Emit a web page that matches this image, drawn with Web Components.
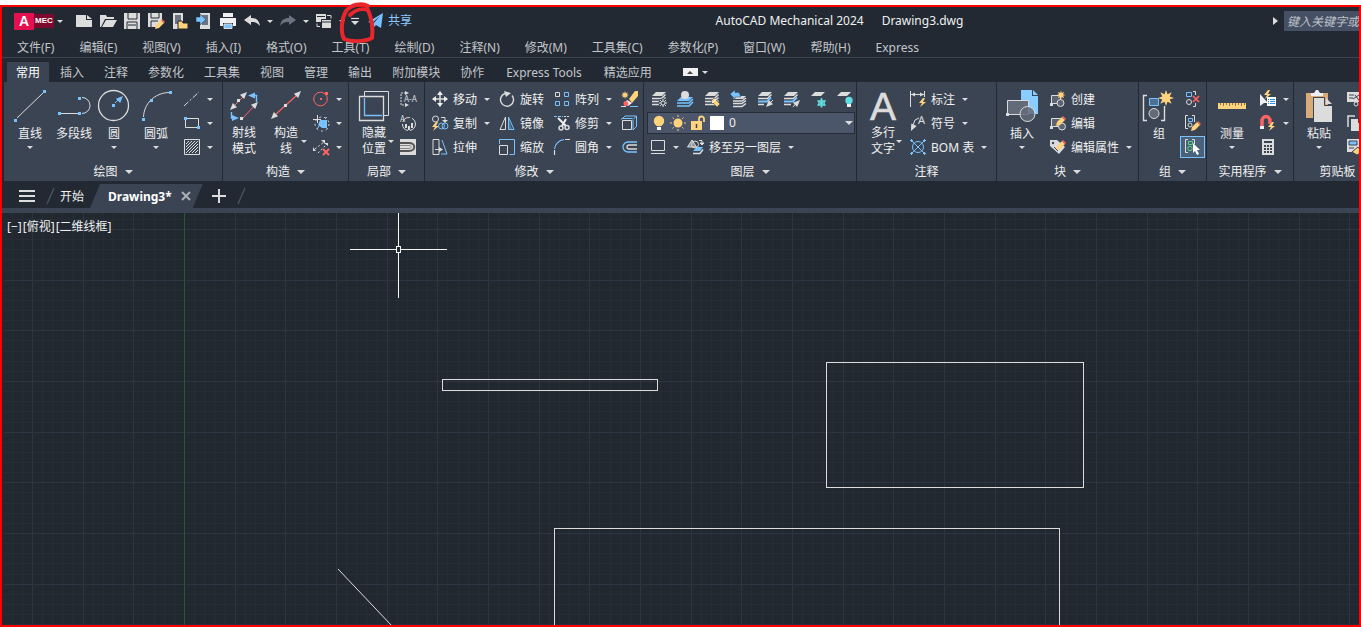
<!DOCTYPE html>
<html lang="zh-CN">
<head>
<meta charset="utf-8">
<title>AutoCAD Mechanical 2024 - Drawing3.dwg</title>
<style>
  html, body { margin: 0; height: 100%; }
  body {
    display: flex; flex-direction: column; box-sizing: border-box; padding-top: 5px;
    background: #fff; overflow: hidden;
    font: 12px/16px "Noto Sans", "Noto Sans CJK SC", sans-serif; color: #f0f0f0;
  }
</style>
</head>
<body>
<cad-window></cad-window>

<script>
const W = '#dcdcdc', B = '#78c3ff', Y = '#ffd27d', R = '#ff6464', P = '#3b4453';
const sheet = (y, f = W) => `<path d="M5 ${y}h10l-4 4H1z" fill="${f}" stroke="none"/>`;
const layers = (c = W) => sheet(1) +
  `<path d="M1 7.500h9.500l4-4M1 10.500h9.500l4-4M1 13.500h9.500l4-4" stroke="${c}" stroke-width="1.500"/>`;
const sq = (x, y, c = B) => `<path d="M${x} ${y}h3v3h-3z" fill="${c}" stroke="none"/>`;
const bolt = (x, y) => `<path transform="translate(${x} ${y})" d="M4 0L0 5h3L1 9l6-5H4l2-4z" fill="${Y}" stroke="none"/>`;
const pencil = (x, y) => `<g transform="translate(${x} ${y})" stroke="none"><path d="M0 9l1-4 5-5 3 3-5 5z" fill="${Y}"/><path d="M6 0l1-1 3 3-1 1z" fill="${R}"/></g>`;
const star = (x, y, s) => `<path transform="translate(${x} ${y}) scale(${s})" d="M0-8l1.500 4.300L5.700-5.700 3.700-1.500 8 0 3.700 1.500 5.700 5.700 1.500 3.700 0 8-1.500 3.700-5.700 5.700-3.700 1.500-8 0-3.700-1.500-5.700-5.700-1.500-3.700z" fill="${Y}" stroke="none"/>`;
const head = (x, y, a, c = W) => `<path transform="translate(${x} ${y}) rotate(${a})" d="M0 0l-7-3v6z" fill="${c}" stroke="none"/>`;

/* name: [width, height, markup] */
const ICONS = {
  new: [16, 16, `<path d="M0 2h10v5h6v7H0z M11 2l5 4h-5z" fill="${W}" stroke="none"/>`],
  open: [18, 16, `<path d="M1 14V2h6l1 2h7v2H6L2 14z M7 7h11l-4 7H3z" fill="${W}" stroke="none"/>`],
  save: [16, 16, `<path d="M0 0h16v16H0z" fill="${W}" stroke="none"/><path d="M4 0v6h9V0M3 16V9h10v7" stroke="#222933"/><path d="M4 12h8" stroke="#222933"/>`],
  saveas: [16, 16, `<path d="M0 0h14v9l-5 5H0z" fill="${W}" stroke="none"/><path d="M3 0v5h8V0M3 14V8h7" stroke="#222933"/>${pencil(7, 7)}`],
  openm: [16, 16, `<path d="M1 0h10v16H1z" fill="${W}" stroke="none"/><path d="M3 2h6v9H3z" fill="#6b7482" stroke="none"/><path d="M6 8h4l1 2h5v6H6z" fill="${Y}" stroke="#222933"/>`],
  savem: [16, 16, `<path d="M4 0h10v16H4z" fill="${W}" stroke="none"/><path d="M6 2h6v10H6z" fill="#6b7482" stroke="none"/><path d="M0 4h4V1l6 5.500L4 12V9H0z" fill="${B}" stroke="#222933" stroke-width=".5"/>`],
  print: [16, 16, `<path d="M3 0h10v4H3zM0 5h16v8h-3v-3H3v3H0z" fill="#f0f0f0" stroke="none"/><path d="M4 11h8v4.500H4z" fill="${B}" stroke="${W}"/>`],
  undo: [16, 16, `<path d="M0 7l7-5v3c5 0 8 2 9 8-3-4-6-4-9-4v3z" fill="${W}" stroke="none"/>`],
  redo: [16, 16, `<path d="M16 7L9 2v3C4 5 1 7 0 13c3-4 6-4 9-4v3z" fill="#6b7280" stroke="none"/>`],
  batch: [18, 16, `<path d="M1 1h10v8H1z" fill="${W}" stroke="none"/><path d="M6.500 6.500h10v9h-10z" fill="${W}" stroke="#222933"/><path d="M7 9h9M2 3.500h8" stroke="#222933"/><path d="M12 2.500h4v3M5 13.500H2v-3"/>`],
  custom: [10, 16, `<path d="M1 5.500h8" stroke-width="1.200"/><path d="M1 8h8l-4 4z" fill="${W}" stroke="none"/>`],
  plane: [16, 16, `<path d="M0 9L15 0l-2 15-5-3-3 3v-4l7-8-8 7z" fill="${B}" stroke="none"/>`],
  line: [36, 36, `<path d="M5 31L31 6"/>${sq(2, 32)}${sq(31, 3)}`],
  pline: [36, 36, `<path d="M5 26.500h17M26 10.500a8 8 0 0 1 0 16"/>${sq(2, 25)}${sq(22, 25)}${sq(22, 10)}`],
  circle: [36, 36, `<circle cx="17.500" cy="18.500" r="15" stroke-width="1.300"/>${sq(16, 17)}<path d="M19 16l6-6" stroke="${B}"/>${head(27, 9, -45, B)}`],
  arc: [36, 36, `<path d="M5.500 30C6 17 16 6 31 5.500"/>${sq(4, 31)}${sq(12, 12)}${sq(31, 4)}`],
  xline: [16, 16, `<path d="M0 15L15 1" stroke-dasharray="6 2 2 2"/>`],
  rect: [16, 16, `<path d="M1.500 3.500h13v9h-13z"/><path d="M0 2h3v3H0zM13 11h3v3h-3z" fill="${B}" stroke="none"/>`],
  hatch: [16, 16, `<path d="M.5 .5h15v15H.5z"/><path d="M2 5l3-3M2 8l6-6M2 11l9-9M2 14L14 2M5 14l9-9M8 14l6-6M11 14l3-3"/>`],
  rays: [36, 36, `<path d="M8 19L20 7M17 31l12-13" stroke="${R}"/>${sq(11, 12, W)}${sq(14, 30, W)}${head(21, 5, -45)}${head(4, 23, 135)}${head(32, 15, -45)}<path d="M30.500 15V8.500H26M5.500 25v6H9" stroke="${B}" stroke-width="1.400"/>${head(22, 8.500, 180, B)}${head(13, 31, 0, B)}`],
  cline: [36, 36, `<path d="M7 28L29 8" stroke="${R}" stroke-width="1.200"/>${sq(16, 17, W)}${head(33, 4, -45)}${head(3, 32, 135)}`],
  ccircle: [16, 16, `<circle cx="7.500" cy="8" r="6.800" stroke="${R}"/><path d="M7 7h2v2H7zM12 1h3v3h-3z" fill="${R}" stroke="none"/>`],
  cauto: [16, 16, `<circle cx="9" cy="9" r="7" stroke-dasharray="2 3"/><path d="M7 5h7v8H9l-4-3z" fill="${B}" stroke="none"/><path d="M0 4.500h8M4.500 0v8"/><path d="M14 2l-2 2M15 14l-3-2M4 14l2-3" stroke="${B}"/>`],
  cdel: [16, 16, `<path d="M2 10l9-7M5 14l9-9" stroke-dasharray="2 2"/><path d="M0 8l3 4H0zM8 1h4v4zM11 4h4v3z" fill="${W}" stroke="none"/><path d="M10 10l6 6M16 10l-6 6" stroke="${R}" stroke-width="2"/>`],
  hide: [36, 36, `<path d="M8.500 4.500h24v24h-24z"/><path d="M3.500 9.500h24v24h-24z" fill="${P}" stroke-width="1.300"/><path d="M8.500 11v17.500H26" stroke="${B}" stroke-width="1.300"/>`],
  section: [18, 16, `<path d="M6 2H1v12h5" stroke-dasharray="2 1"/><path d="M5 0l4 2-4 2zM5 12l4 2-4 2z" fill="${W}" stroke="none"/><text x="4" y="11" font-size="8" fill="${W}" stroke="none">A-A</text>`],
  detail: [18, 16, `<circle cx="9" cy="9" r="6.500" stroke-dasharray="9 2"/><text x="0" y="7" font-size="8" fill="${W}" stroke="none">A</text><path d="M6 9v4M9 11v4M12 8v5" stroke-width="2"/>`],
  shape: [16, 16, `<path d="M0 0h16v16H0z" fill="${W}" stroke="none"/><path d="M0 4h9c7 0 7 8 0 8H0" stroke="#555" stroke-width="2"/><path d="M0 6.500h9c3 0 3 3 0 3H0" stroke="#888"/>`],
  move: [16, 16, `<path d="M8 1v14M1 8h14" stroke-width="1.500"/><path d="M8 0l3 4H5zM8 16l3-4H5zM0 8l4-3v6zM16 8l-4-3v6z" fill="#f0f0f0" stroke="none"/>`],
  rotate: [16, 16, `<path d="M6 2.500a6.500 6.500 0 1 0 7 2" stroke-width="1.400"/><path d="M5 0l7 2-5 4z" fill="${W}" stroke="none"/>`],
  array: [16, 16, `<path d="M1.500 1.500h4v4h-4z"/><path d="M10.500 1.500h4v4h-4zM1.500 10.500h4v4h-4zM10.500 10.500h4v4h-4z" stroke="${B}"/>`],
  erase: [17, 17, `<path d="M8 8l6-8h3v5l-6 7z" fill="${Y}" stroke="none"/><path d="M6 9l5 3-4 3-3-3z" fill="#fff" stroke="none"/><circle cx="5" cy="12.500" r="2.500" fill="${R}" stroke="none"/><path d="M9 15.500h8" stroke="${B}"/><path d="M0 15.500h5"/>${star(4, 4, .5)}`],
  copy: [16, 16, `<circle cx="3.500" cy="4" r="3"/><path d="M9 2.500h4v3"/><path d="M10 5h6l-3 3z" fill="${W}" stroke="none"/>${bolt(0, 7)}<circle cx="9.500" cy="11" r="3" stroke="${B}"/><circle cx="13" cy="11" r="3" stroke="${B}"/>`],
  mirror: [16, 16, `<path d="M6.500 2v12.500H1z"/><path d="M9.500 2v12.500H15z" stroke="${B}"/><path d="M10 4v10h3z" fill="${B}" opacity=".4" stroke="none"/>`],
  trim: [16, 16, `<path d="M0 1.500h9" stroke="${B}" stroke-dasharray="3 1"/><path d="M4 3l8 8M12 4l-4 7" stroke-width="2" stroke="#f0f0f0"/><circle cx="7" cy="13" r="2" stroke-width="1.500"/><circle cx="13" cy="12.500" r="2" stroke-width="1.500"/><path d="M10 1.500h5" stroke-dasharray="2 1"/>`],
  cube: [16, 16, `<path d="M1.500 5.500h9v9h-9z"/><path d="M.5 4.500L4 1h11.500v10.500L12 15M12 15V5M12 4.500L15.500 1M.5 3.500h11" stroke="${B}"/>`],
  stretch: [16, 16, `<path d="M1 .5h6v15H1z"/><path d="M10 1l5 14h-6" stroke="${B}"/><path d="M3 10.500h5"/><path d="M7 8l4 2.500L7 13z" fill="${W}" stroke="none"/>`],
  scale: [16, 16, `<path d="M3 .5h12.500v15h-5M.5 5V.5H3" stroke="${B}"/><path d="M.5 6.500h8v9h-8z"/>`],
  fillet: [16, 16, `<path d="M.5 10C1 5 5 1 10 .5" stroke="${B}" stroke-width="1.200"/><path d="M.5 11v5M11 .5h5" stroke-width="1.200"/>`],
  offset: [17, 16, `<path d="M16 3H7a5 5 0 0 0 0 10h9" stroke="${B}" stroke-width="1.300"/><path d="M16 6H8a2 2 0 0 0 0 4h8" stroke-width="1.300"/>`],
  lprops: [17, 17, layers() + `<circle cx="12" cy="12" r="4.500" fill="${P}" stroke="none"/><circle cx="12" cy="12" r="2"/><path d="M12 8v2M12 14v2M8 12h2M14 12h2M9 9l1.500 1.500M13.500 13.500L15 15M15 9l-1.500 1.500M9 15l1.500-1.500"/>`],
  lcur: [17, 17, `<path d="M4 6h12l-4 4H0z" fill="${B}" stroke="none"/><circle cx="8" cy="4" r="4" fill="${W}" stroke="none"/><path d="M0 12h12l4-4M0 15h12l4-4" stroke="${B}" stroke-width="1.500"/>`],
  lmatch: [17, 17, layers() + `<path d="M7 10l3-3 6 6-3 3z" fill="${Y}" stroke="${P}" stroke-width=".5"/><path d="M8 12l4-4" stroke="#fff"/>`],
  lprev: [17, 17, `<path d="M6 5h10l-3 3H3z" fill="${W}" stroke="none"/><path d="M3 10h9l4-3M3 12.500h9l4-3M3 15.500h9l4-3" stroke-width="1.500"/><path d="M0 3l5-4v2.500h4L11 6H5v2z" fill="${B}" stroke="${P}" stroke-width=".5"/>`],
  liso: [17, 17, sheet(1) + `<path d="M1 7.500h9.500l4-4M1 13.500h6" stroke-width="1.500"/><path d="M1 10.500h9l4-4" stroke="${B}" stroke-width="1.800"/><path d="M16 9l-5 5"/>${head(9, 16, 135)}`],
  luniso: [17, 17, sheet(1) + `<path d="M1 7.500h9.500l4-4M1 13.500h7" stroke-width="1.500"/><path d="M1 10.500h9l4-4" stroke="${B}" stroke-width="1.800"/><path d="M10 16l4-5"/>${head(17, 9, -45)}`],
  lfreeze: [17, 17, `${sheet(1)}<path d="M11.500 7v9.500M7.500 9.500l8 5M15.500 9.500l-8 5" stroke="#62dbe0" stroke-width="1.600"/><circle cx="11.500" cy="12" r="3" stroke="#62dbe0"/>`],
  loff: [17, 17, `${sheet(1)}<circle cx="13" cy="9.500" r="3.700" fill="#62dbe0" stroke="none"/><path d="M11 13h4v3h-4z" fill="#f0f0f0" stroke="none"/>`],
  bulb: [12, 16, `<circle cx="6" cy="6" r="5.200" fill="${Y}" stroke="none"/><path d="M3.500 9h5v2h-5z" fill="${Y}" stroke="none"/><path d="M4 12h4v3H4z" fill="#fff" stroke="none"/>`],
  sun: [16, 16, `<circle cx="8" cy="8" r="4.500" fill="${Y}" stroke="none"/><path d="M8 0v2M8 14v2M0 8h2M14 8h2M2.500 2.500l1.300 1.300M12.200 12.200l1.300 1.300M13.500 2.500l-1.300 1.300M3.800 12.200l-1.300 1.300" stroke="${Y}"/>`],
  lock: [14, 16, `<path d="M0 6h11v9H0z" fill="${Y}" stroke="none"/><path d="M8 7V4a2.500 2.500 0 0 1 5 0v3" stroke="${Y}" stroke-width="1.800"/><path d="M5.500 9v4" stroke="${P}" stroke-width="1.500"/>`],
  lrect: [15, 16, `<path d="M.5 1.500h13v10H.5zM0 14.500h14"/>`],
  lmove: [17, 16, `<path d="M5 1L.5 8h9z" fill="#8b929c"/><circle cx="8" cy="5.500" r="3.500"/><path d="M12 1.500h3v3"/><path d="M13 4h4l-2 2z" fill="${W}"/><path d="M10 8h6l-3 4H6z" fill="${B}" stroke="none"/><path d="M6 14.500h7l3-4" stroke="${W}" stroke-width="1.500"/>`],
  mtext: [36, 36, `<text x="18" y="33" text-anchor="middle" font-family="Liberation Sans, sans-serif" font-size="39" stroke="${W}" stroke-width=".6" fill="${W}">A</text>`],
  dim: [16, 16, `<path d="M.5 0v16M14.500 0v6M1 3.500h13"/><path d="M1 3.500l4-2v4zM14 3.500l-4-2v4z" fill="${W}" stroke="none"/>${bolt(9, 7)}`],
  symbol: [16, 16, `<path d="M2 13L5 5l4-2"/>${head(1, 16, 115)}<text x="8" y="9" font-size="11" fill="${W}" stroke="none">A</text>`],
  bom: [16, 16, `<path d="M2 2l12 12M14 2L2 14" stroke="${B}"/><circle cx="8" cy="8" r="5.500" stroke="${B}"/><path d="M0 1.500h3M13 1.500h3M0 14.500h3M13 14.500h3M1.500 0v3M14.500 0v3M1.500 13v3M14.500 13v3" stroke="${B}"/>`],
  insert: [36, 36, `<path d="M17 3h11v6h6v18H17z" fill="#8accff" stroke="none"/><path d="M29 3l5 5h-5z" fill="#8accff" stroke="none"/><path d="M3.500 13.500h21v14h-21z" fill="#636a78"/><circle cx="23.500" cy="27" r="7.500" fill="#636a78" fill-opacity=".85"/>${sq(2, 26, W)}`],
  bcreate: [16, 16, `<path d="M1.500 4.500h9v8h-9z" fill="#5d6471"/><circle cx="10.500" cy="12" r="3.500" fill="#5d6471"/>${star(11, 4, .55)}${sq(0, 12, W)}`],
  bedit: [16, 16, `<path d="M1.500 3.500h9v8h-9z" fill="#5d6471"/><circle cx="12" cy="11.500" r="3.500" fill="#5d6471"/>${pencil(6, 2)}${sq(0, 11, W)}`],
  battr: [16, 16, `<path d="M0 1h7l8 7-6 7-9-8z" fill="${W}" stroke="none"/><circle cx="3" cy="4" r="1.200" fill="${P}" stroke="none"/>${pencil(6, 2)}<path d="M4 8l4 4" stroke="${P}"/>`],
  group: [36, 36, `<path d="M6 8.500H2.500v25H6M20 33.500h3.500V19" stroke-width="1.400"/><path d="M8.500 11.500h9v7h-9z" stroke="${B}" fill="#4d6f92"/><circle cx="13" cy="26.500" r="5" fill="#636a78"/>${star(25, 11, 1)}`],
  ungroup: [16, 16, `<path d="M1.500 1.500h5v4h-5z" stroke="${B}"/><circle cx="4" cy="11" r="2.500"/><path d="M8 .5h2.500V4M8 15.500h2.500V12"/><path d="M8 5l6 6M14 5l-6 6" stroke="${R}" stroke-width="1.700"/>`],
  gedit: [16, 16, `<path d="M3 .5H.5v13H3M7 .5h2.500V7"/><path d="M3.500 3.500h4v3h-4z" stroke="${B}"/><circle cx="5" cy="10" r="2"/>${pencil(6, 7)}`],
  gsel: [16, 16, `<path d="M3 .5H.5v13H3M7 .5h2.500V5"/><path d="M3.500 2.500h4v3h-4z" stroke="#5fd07d"/><circle cx="5" cy="9.500" r="2.200" stroke="#5fd07d"/><path d="M8 4l7 7h-3l2 4-2 1-2-4-2 2z" fill="#fff" stroke="none"/>`],
  measure: [36, 36, `<path d="M4 16h28v6H4z" fill="${Y}" stroke="none"/><path d="M6.500 16v2M9.500 16v3M12.500 16v2M15.500 16v3M18.500 16v2M21.500 16v3M24.500 16v2M27.500 16v3M30.500 16v2" stroke="#8a7442"/>`],
  qselect: [16, 16, `<path d="M0 3l8 9H4l-4 3z" fill="#f0f0f0" stroke="none"/>${bolt(4, -1)}<path d="M7 6h9v9H7z" fill="#fff" stroke="none"/><path d="M10 8.500h5M10 10.500h5M10 12.500h5M8 8.500h1M8 10.500h1M8 12.500h1" stroke="#2b8fe0"/>`],
  magnet: [16, 16, `<path d="M2 11V6c0-6 8-6 8 0v3" stroke="${R}" stroke-width="3.500"/><path d="M0 11h4v3H0z" fill="#f0f0f0" stroke="none"/>${bolt(8, 7)}`],
  calc: [16, 16, `<path d="M2 0h12v16H2z" fill="${W}" stroke="none"/><path d="M4 3h8" stroke="${P}" stroke-width="2"/><path d="M4 7h8M4 10h8M4 13h8" stroke="${P}" stroke-width="2" stroke-dasharray="2 1"/>`],
  paste: [36, 36, `<path d="M5 6h22v25H5z" fill="#d9ab78" stroke="none"/><path d="M10 6h3l2-3h2l2 3h3v3H10z" fill="#f0f0f0" stroke="none"/><path d="M12.500 10.500h11v8h8v17h-19z" fill="${W}" stroke="${P}"/><path d="M25 11l6 6h-6z" fill="${W}" stroke="none"/>`],
  cut: [16, 16, `<path d="M0 1h14v10H0z" fill="${W}" stroke="none"/><path d="M2 4h5M2 7h4M6 8l6-4M8 4l6 8" stroke="${P}"/><circle cx="9" cy="13" r="2"/>`],
  copyclip: [16, 16, `<path d="M1 12V1h7" stroke-width="1.500"/><path d="M4 4h7v4h4v8H4z" fill="${W}" stroke="none"/>`],
  pspec: [16, 16, `<path d="M0 0h14v13H0z" fill="${W}" stroke="none"/><path d="M2 2h8v4H2z" fill="${B}" stroke="${P}"/><path d="M2 9h5" stroke="${P}"/><path d="M5 13l6-5 4 5-5 3z" fill="${Y}" stroke="${P}"/>`],
  menu: [16, 16, `<path d="M0 3h16M0 8h16M0 13h16" stroke-width="2"/>`],
  slash: [8, 16, `<path d="M1 16L8 0" stroke="#4a5362" stroke-width="1.400"/>`],
  close: [10, 16, `<path d="M1 4l8 8M9 4l-8 8" stroke="#aab0b8" stroke-width="2"/>`],
  plus: [14, 16, `<path d="M7 1v14M0 8h14" stroke-width="2"/>`],
};

const RESET = `
  button, input, select { font: inherit; color: inherit; margin: 0; padding: 0; border: 0; background: none; }
  button { display: flex; align-items: center; white-space: nowrap; }
`;
const define = (name, html, after) => {
  const tpl = document.createElement('template');
  customElements.define(name, class extends HTMLElement {
    connectedCallback() {
      if (this.shadowRoot) return;
      tpl.innerHTML = typeof html === 'function' ? html(this) : html;
      this.attachShadow({ mode: 'open' }).append(tpl.content.cloneNode(true));
      if (after) after(this, this.shadowRoot);
    }
  });
};

define('cad-icon', el => {
  const [w, h, body] = ICONS[el.getAttribute('name')];
  return `<style>:host{display:block;flex:none}svg{display:block;overflow:visible}</style>
  <svg width="${w}" height="${h}" viewBox="0 0 ${w} ${h}" fill="none" stroke="${W}" aria-hidden="true">${body}</svg>`;
});

/* Small drop-down arrow; "large" is the one beside a panel title */
define('cad-arrow', `<style>
  :host { display: block; flex: none; border: solid transparent; border-width: 3px 3px 0; border-top-color: #dcdcdc; }
  :host([large]) { border-width: 4px 4px 0; border-top-color: #dcdcdc; }
  :host([right]) { border-width: 4px 0 4px 5px; border-color: transparent transparent transparent #dcdcdc; }
</style>`);

/* Ribbon button with a 36px picture over one or two lines of text */
define('big-button', el => `<style>${RESET}
  :host { display: block; flex: none; width: var(--button-width, 44px); }
  button { position: relative; flex-direction: column; width: 100%; line-height: 16px; }
  span { margin-top: 3px; text-align: center; white-space: pre-line; }
  cad-arrow { margin-top: 4px; }
  :host([two]) span { margin-top: 2px; }
  :host([two]) cad-arrow { position: absolute; margin: 0; right: 0; bottom: 14px; }
  </style>
  <button type="button"><cad-icon name="${el.getAttribute('icon')}"></cad-icon><span><slot></slot></span>${el.hasAttribute('menu') ? '<cad-arrow></cad-arrow>' : ''}</button>`);

/* Ribbon button with a 16px picture and its text at the side */
define('small-button', el => `<style>${RESET}
  :host { display: block; flex: none; }
  button { height: 24px; }
  span { margin-left: 5px; padding-top: 2px; }
  cad-arrow { margin-left: 7px; }
  :host([on]) button { box-sizing: border-box; height: 22px; margin: 1px 0 1px -5px; padding: 0 3px 0 4px; background: #4a617c; border: 1px solid #78c3ff; }
  </style>
  <button type="button" aria-label="${el.getAttribute('tip') || el.textContent}"><cad-icon name="${el.getAttribute('icon')}"></cad-icon>${el.textContent ? '<span><slot></slot></span>' : ''}${el.hasAttribute('menu') ? '<cad-arrow></cad-arrow>' : ''}</button>`);

define('ribbon-col', `<style>:host{display:flex;flex-direction:column;align-items:flex-start;flex:none;width:var(--col-width,auto)}</style><slot></slot>`);

define('ribbon-panel', el => `<style>${RESET}
  :host { display: flex; flex-direction: column; flex: none; width: var(--w); box-sizing: border-box; padding-top: 5px; border-right: 1px solid #222933; }
  .body { display: flex; height: 72px; padding-left: var(--p, 7px); }
  .title { align-self: stretch; justify-content: center; height: 22px; gap: 7px; padding-top: 3px; }
  </style>
  <div class="body"><slot></slot></div>
  <button type="button" class="title">${el.getAttribute('label')}${el.hasAttribute('menu') ? '<cad-arrow large></cad-arrow>' : ''}</button>`);

define('layer-select', `<style>${RESET}
  :host { display: flex; align-items: center; box-sizing: border-box; width: 208px; height: 22px; margin: 1px 0 1px -4px; padding: 0 1px 0 5px; background: #4b566a; border: 1px solid #262d38; }
  cad-icon { margin-right: 5px; }
  i { width: 14px; height: 14px; margin-right: 5px; background: #fff; }
  select { flex: 1; min-width: 0; appearance: none; height: 20px; }
  </style>
  <cad-icon name="bulb"></cad-icon><cad-icon name="sun"></cad-icon><cad-icon name="lock"></cad-icon><i></i>
  <select aria-label="图层"><option>0</option></select><cad-arrow large></cad-arrow>`);

define('layer-tools', `<style>:host{display:flex;justify-content:space-between;width:202px}:host([start]){justify-content:flex-start;gap:8px}</style><slot></slot>`);

define('title-bar', `<style>${RESET}
  :host { display: flex; align-items: center; height: 28px; padding: 0 0 3px 12px; }
  .mark { display: grid; place-items: center; width: 20px; height: 17px; background: #e51050; color: #fff; font: bold 14px/16px "Liberation Sans", sans-serif; }
  .mec { width: 20px; height: 14px; margin-right: 3px; background: #7d0a2e; color: #fff; font: bold 8px/14px "Liberation Sans", sans-serif; text-align: center; }
  nav { display: flex; align-items: center; margin-left: 9px; }
  nav > button { justify-content: center; width: 24px; height: 24px; }
  nav > button.drop { width: 12px; }
  nav > button:last-child { width: 14px; }
  .share { color: #8dcbff; gap: 4px; margin-left: 6px; }
  h1 { flex: 1; display: flex; justify-content: center; gap: 18px; margin: 0; font: inherit; white-space: nowrap; }
  .hint { padding: 4px 6px; }
  input { flex: none; box-sizing: border-box; width: 75px; height: 20px; padding-left: 3px; background: #465064; font-style: italic; }
  input::placeholder { color: #c0c4cb; opacity: 1; }
  </style>
  <button type="button" class="app" aria-label="应用程序菜单"><span class="mark">A</span><span class="mec">MEC</span><cad-arrow></cad-arrow></button>
  <nav aria-label="快速访问工具栏"></nav>
  <button type="button" class="share"><cad-icon name="plane"></cad-icon>共享</button>
  <h1><span>AutoCAD Mechanical 2024</span><span>Drawing3.dwg</span></h1>
  <button type="button" class="hint" aria-label="展开搜索"><cad-arrow right></cad-arrow></button>
  <input type="text" aria-label="搜索" placeholder="键入关键字或短语">`, (el, root) => {
  const items = ['new:新建', 'open:打开', 'save:保存', 'saveas:另存为', 'openm:从移动设备打开', 'savem:保存到移动设备', 'print:打印', 'undo:放弃', '', 'redo:重做', '', 'batch:工作空间', '', 'custom:自定义'];
  root.querySelector('nav').innerHTML = items.map(s => {
    const [n, t] = s.split(':');
    return n ? `<button type="button" aria-label="${t}"><cad-icon name="${n}"></cad-icon></button>`
             : '<button type="button" class="drop" aria-label="更多"><cad-arrow></cad-arrow></button>';
  }).join('');
});
define('menu-bar', `<style>${RESET}
  :host { display: flex; gap: 25px; height: 19px; padding-left: 15px; border-bottom: 1px solid #3b4453; color: #c3c6ca; }
  </style>`, (el, root) => {
  root.innerHTML += el.getAttribute('items').split('|').map(t => `<button type="button">${t}</button>`).join('');
});
define('ribbon-tabs', `<style>${RESET}
  :host { display: flex; align-items: center; padding: 4px 0 0 5px; color: #c3c6ca; }
  button { height: 20px; padding: 2px 9px 0; margin-right: 2px; }
  button.latin { padding: 2px 11px 0; }
  button[aria-selected=true] { background: #3b4453; color: #fff; }
  .min { display: grid; place-items: center; width: 15px; height: 8px; margin-left: 20px; padding: 0; background: #f0f0f0; }
  .min::before { content: ""; border: solid transparent; border-width: 0 3px 3px; border-bottom-color: #444; }
  .more { height: auto; padding: 4px 2px; }
  </style>`, (el, root) => {
  root.innerHTML += el.getAttribute('items').split('|').map((t, i) => `<button type="button" role="tab" class="${/^[A-Z]/.test(t) ? 'latin' : ''}" aria-selected="${i === 0}">${t}</button>`).join('')
    + '<button type="button" class="min" aria-label="最小化功能区"></button><button type="button" class="more" aria-label="最小化选项"><cad-arrow></cad-arrow></button>';
});

define('file-tabs', `<style>${RESET}
  :host { display: flex; align-items: center; height: 24px; padding: 3px 0 0 17px; border-bottom: 5px solid #3b4453; }
  .start { margin: 0 6px; padding-top: 2px; }
  .tab { display: flex; align-items: center; height: 24px; gap: 9px; padding: 0 12px 0 18px; background: #3b4453; clip-path: polygon(10px 0, 100% 0, calc(100% - 10px) 100%, 0 100%); }
  .tab button:first-child { padding-top: 2px; font-weight: bold; color: #fff; }
  .menu { margin-right: 11px; }
  .add { margin: 0 11px 0 9px; }
  </style>
  <button type="button" class="menu" aria-label="文件选项卡菜单"><cad-icon name="menu"></cad-icon></button>
  <cad-icon name="slash"></cad-icon>
  <button type="button" class="start">开始</button>
  <div class="tab"><button type="button">Drawing3*</button><button type="button" aria-label="关闭"><cad-icon name="close"></cad-icon></button></div>
  <button type="button" class="add" aria-label="新图形"><cad-icon name="plus"></cad-icon></button>
  <cad-icon name="slash"></cad-icon>`);

/* Model space: grid, axis, entities and the crosshair cursor */
define('drawing-area', `<style>${RESET}
  :host { display: block; position: relative; flex: 1; min-height: 0; margin-left: 2px; overflow: hidden; background: #212830; }
  svg { display: block; width: 100%; height: 100%; }
  .view { position: absolute; left: 3px; top: 6px; display: flex; gap: 1px; }
  </style>
  <svg fill="none" shape-rendering="crispEdges" role="img" aria-label="图形"></svg>
  <div class="view"><button type="button">[−]</button><button type="button">[俯视]</button><button type="button">[二维线框]</button></div>`, (el, root) => {
  const step = 152 / 15, minor = [], major = [];
  for (let i = -2; i < 260; i++) {
    const x = Math.round(28 + i * step) + .5, y = Math.round(16 + i * step) + .5, to = i % 5 ? minor : major;
    to.push(`M${x} 0V2000`, `M0 ${y}H2600`);
  }
  root.querySelector('svg').innerHTML = `
    <path d="${minor.join('')}" stroke="#262d37"/>
    <path d="${major.join('')}" stroke="#2d3543"/>
    <path d="M180.500 0V2000" stroke="#235c27"/>
    <g stroke="#dcdcdc">
      <path d="M438.500 166.500h215v11h-215z"/>
      <path d="M822 149.500h257v125h-257z"/>
      <path d="M550.500 800V315.500h505V800"/>
      <path d="M334 356l54 57" shape-rendering="auto"/>
    </g>
    <path d="M346 36.500h46M397 36.500h46M394.500 0v33M394.500 40v45M392.500 33.500h4v6h-4z" stroke="#f4f4f4"/>`;
});

define('ribbon-bar', `<style>
  :host { display: flex; height: 99px; margin-left: 2px; background: #3b4453; overflow: hidden; }
  ribbon-col { padding-left: 6px; }
  ribbon-col.flush { padding-left: 0; }
  </style>
  <ribbon-panel label="绘图" menu style="--w:219px;--p:4px">
    <big-button icon="line" menu>直线</big-button><big-button icon="pline">多段线</big-button>
    <big-button icon="circle" menu style="--button-width:36px">圆</big-button><big-button icon="arc" menu style="--button-width:48px">圆弧</big-button>
    <ribbon-col style="padding-left:4px"><small-button icon="xline" tip="构造线" menu></small-button><small-button icon="rect" tip="矩形" menu></small-button><small-button icon="hatch" tip="图案填充" menu></small-button></ribbon-col>
  </ribbon-panel>
  <ribbon-panel label="构造" menu style="--w:126px;--p:0px">
    <big-button icon="rays" two style="--button-width:42px">射线
模式</big-button><big-button icon="cline" two menu style="--button-width:42px">构造
线</big-button>
    <ribbon-col><small-button icon="ccircle" tip="构造圆" menu></small-button><small-button icon="cauto" tip="自动构造线" menu></small-button><small-button icon="cdel" tip="删除构造线" menu></small-button></ribbon-col>
  </ribbon-panel>
  <ribbon-panel label="局部" menu style="--w:76px;--p:5px">
    <big-button icon="hide" two menu style="--button-width:40px">隐藏
位置</big-button>
    <ribbon-col><small-button icon="section" tip="剖面线"></small-button><small-button icon="detail" tip="局部视图"></small-button><small-button icon="shape" tip="轮廓"></small-button></ribbon-col>
  </ribbon-panel>
  <ribbon-panel label="修改" menu style="--w:219px">
    <ribbon-col class="flush" style="--col-width:67px"><small-button icon="move" menu>移动</small-button><small-button icon="copy" menu>复制</small-button><small-button icon="stretch">拉伸</small-button></ribbon-col>
    <ribbon-col class="flush" style="--col-width:55px"><small-button icon="rotate">旋转</small-button><small-button icon="mirror">镜像</small-button><small-button icon="scale">缩放</small-button></ribbon-col>
    <ribbon-col class="flush" style="--col-width:67px"><small-button icon="array" menu>阵列</small-button><small-button icon="trim" menu>修剪</small-button><small-button icon="fillet" menu>圆角</small-button></ribbon-col>
    <ribbon-col class="flush"><small-button icon="erase" tip="删除"></small-button><small-button icon="cube" tip="分解"></small-button><small-button icon="offset" tip="偏移"></small-button></ribbon-col>
  </ribbon-panel>
  <ribbon-panel label="图层" menu style="--w:213px">
    <ribbon-col class="flush">
      <layer-tools><small-button icon="lprops" tip="图层特性"></small-button><small-button icon="lcur" tip="置为当前"></small-button><small-button icon="lmatch" tip="匹配图层"></small-button><small-button icon="lprev" tip="上一个"></small-button><small-button icon="liso" tip="隔离"></small-button><small-button icon="luniso" tip="取消隔离"></small-button><small-button icon="lfreeze" tip="冻结"></small-button><small-button icon="loff" tip="关"></small-button></layer-tools>
      <layer-select></layer-select>
      <layer-tools start><small-button icon="lrect" tip="图层颜色" menu></small-button><small-button icon="lmove" menu>移至另一图层</small-button></layer-tools>
    </ribbon-col>
  </ribbon-panel>
  <ribbon-panel label="注释" style="--w:140px">
    <big-button icon="mtext" two menu style="--button-width:38px">多行
文字</big-button>
    <ribbon-col style="padding-left:8px"><small-button icon="dim" menu>标注</small-button><small-button icon="symbol" menu>符号</small-button><small-button icon="bom" menu>BOM 表</small-button></ribbon-col>
  </ribbon-panel>
  <ribbon-panel label="块" menu style="--w:142px;--p:3px">
    <big-button icon="insert" menu>插入</big-button>
    <ribbon-col><small-button icon="bcreate">创建</small-button><small-button icon="bedit">编辑</small-button><small-button icon="battr" menu>编辑属性</small-button></ribbon-col>
  </ribbon-panel>
  <ribbon-panel label="组" menu style="--w:68px;--p:0px">
    <big-button icon="group" style="--button-width:40px">组</big-button>
    <ribbon-col><small-button icon="ungroup" tip="解除编组"></small-button><small-button icon="gedit" tip="组编辑"></small-button><small-button icon="gsel" tip="组选择" on></small-button></ribbon-col>
  </ribbon-panel>
  <ribbon-panel label="实用程序" menu style="--w:87px;--p:3px">
    <big-button icon="measure" menu>测量</big-button>
    <ribbon-col><small-button icon="qselect" tip="快速选择" menu></small-button><small-button icon="magnet" tip="捕捉" menu></small-button><small-button icon="calc" tip="计算器"></small-button></ribbon-col>
  </ribbon-panel>
  <ribbon-panel label="剪贴板" style="--w:88px;--p:3px">
    <big-button icon="paste" menu>粘贴</big-button>
    <ribbon-col><small-button icon="cut" tip="剪切"></small-button><small-button icon="copyclip" tip="复制"></small-button><small-button icon="pspec" tip="选择性粘贴"></small-button></ribbon-col>
  </ribbon-panel>`);

/* Hand-drawn mark round the toolbar's customise button */
define('red-mark', `<style>:host{position:absolute;left:338px;top:0;pointer-events:none}svg{display:block}</style>
  <svg width="40" height="46" viewBox="0 0 40 46" fill="none" stroke="#e8262b" stroke-width="4" stroke-linecap="round" stroke-linejoin="round" aria-hidden="true"><path d="M12 15C17 10 24 8 30 10c4 9 5 19 4 28-8 4-21 4-28 1C2 31 4 18 8 11 13 5 23 2 30 6"/></svg>`);

define('cad-window', `<style>
  :host { display: flex; flex-direction: column; flex: 1; min-height: 0; overflow: hidden; border: 2px solid #f00; background: #222933; }
  </style>
  <title-bar></title-bar>
  <menu-bar items="文件(F)|编辑(E)|视图(V)|插入(I)|格式(O)|工具(T)|绘制(D)|注释(N)|修改(M)|工具集(C)|参数化(P)|窗口(W)|帮助(H)|Express"></menu-bar>
  <ribbon-tabs items="常用|插入|注释|参数化|工具集|视图|管理|输出|附加模块|协作|Express Tools|精选应用"></ribbon-tabs>
  <ribbon-bar></ribbon-bar>
  <file-tabs></file-tabs>
  <drawing-area></drawing-area>
  <red-mark></red-mark>`);
</script>
</body>
</html>
